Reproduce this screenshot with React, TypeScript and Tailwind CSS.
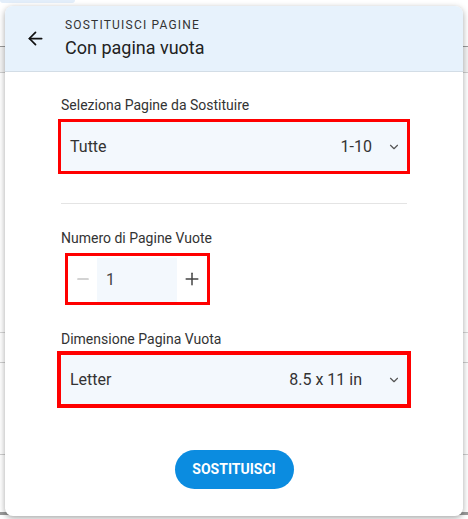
import { ArrowLeft, ChevronDown, Minus, Plus } from "lucide-react";

const SelectBox = ({ left, right, thick }: { left: string; right: string; thick?: boolean }) => {
  return (
    <div className={thick ? "-mx-[4px] border-4 border-[#ff0000]" : "-mx-[3px] border-[3px] border-[#ff0000]"}>
      <div className="h-[49px] bg-[#f3f8fd] rounded-[4px] flex items-center pl-[9px] pr-[6px] text-[16px] text-[#333]">
        <span className="flex-1">{left}</span>
        <span className={thick ? "mr-[25px]" : "mr-[15px]"}>{right}</span>
        <ChevronDown size={14} strokeWidth={2} className="text-[#555]" />
      </div>
    </div>
  );
};

export default function App() {
  return (
    <div
      className="relative w-[468px] h-[519px] overflow-hidden bg-white"
      style={{ fontFamily: "Roboto, 'Liberation Sans', sans-serif" }}
    >
      {/* page behind the dialog */}
      <div className="absolute left-0 top-0 w-[75px] h-[3px] bg-[#e3eefa] rounded-b" />
      <div className="flex flex-col">
        <div className="h-[47px] border-b border-[#9a9a9a]" />
        <div className="h-[26px] border-b border-[#cfcfcf] bg-[#f4f4f4]" />
        <div className="h-[260px] border-b border-[#d6d6d6]" />
        <div className="h-[30px] border-b border-[#cfcfcf]" />
        <div className="h-[92px] border-b border-[#cfcfcf]" />
        <div className="h-[60px] border-b-[3px] border-[#9a9a9a]" />
      </div>

      {/* dialog */}
      <div className="absolute left-[5px] top-[6px] w-[458px] h-[510px] bg-white rounded-lg shadow-[0_2px_6px_rgba(0,0,0,0.35)] overflow-hidden flex flex-col">
        <div className="h-[66px] bg-[#e7f2fc] border-b border-[#d3dde6] flex items-center">
          <div className="w-[60px] flex justify-center">
            <ArrowLeft size={21} strokeWidth={2} className="text-[#111]" />
          </div>
          <div className="flex flex-col">
            <span className="text-[12px] leading-[14px] tracking-[1.2px] text-[#333]">SOSTITUISCI PAGINE</span>
            <span className="mt-[5px] text-[18px] leading-[22px] text-[#222]">Con pagina vuota</span>
          </div>
        </div>

        <div className="flex flex-col px-[56px] pt-[25px]">
          <span className="text-[14px] leading-[16px] text-[#333] mb-[6px]">Seleziona Pagine da Sostituire</span>
          <SelectBox left="Tutte" right="1-10" />

          <div className="mt-[29px] h-px bg-[#e4e4e4]" />

          <span className="mt-[26px] text-[14px] leading-[16px] text-[#333] mb-[7px]">Numero di Pagine Vuote</span>
          <div className="ml-[4px] w-[145px] h-[52px] border-[3px] border-[#ff0000] flex items-center">
            <div className="w-[29px] flex justify-center">
              <Minus size={18} strokeWidth={1.5} className="text-[#a8a8a8]" />
            </div>
            <div className="w-[80px] h-[44px] mt-[2px] bg-[#f3f8fd] flex items-center pl-[9px] text-[16px] text-[#444]">1</div>
            <div className="flex-1 flex justify-center">
              <Plus size={20} strokeWidth={1.8} className="text-[#444]" />
            </div>
          </div>

          <span className="mt-[26px] text-[14px] leading-[16px] text-[#333] mb-[4px]">Dimensione Pagina Vuota</span>
          <SelectBox left="Letter" right="8.5 x 11 in" thick />

          <div className="mt-[42px] flex justify-center">
            <button className="w-[119px] h-[39px] rounded-full bg-[#0b8ce0] text-white text-[14px] font-bold">
              SOSTITUISCI
            </button>
          </div>
        </div>
      </div>
    </div>
  );
}
